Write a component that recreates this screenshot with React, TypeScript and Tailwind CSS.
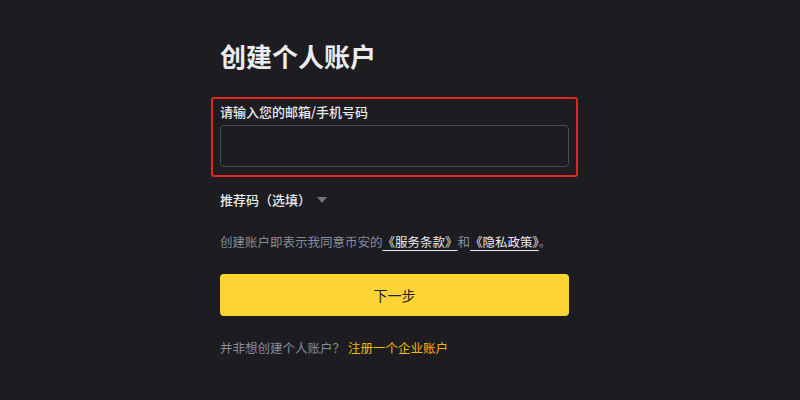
import React from "react";

const App: React.FC = () => {
  return (
    <div
      className="w-[800px] h-[400px] bg-[#1c1c21] overflow-hidden"
      style={{ fontFamily: '"Noto Sans CJK SC", "Noto Sans", sans-serif' }}
    >
      <div className="pl-[220px] pt-[40px] w-[569px] flex flex-col">
        {/* 标题 */}
        <h1 className="text-[26px] leading-[32px] font-bold text-[#eaecef]">创建个人账户</h1>

        {/* 邮箱/手机号 */}
        <div className="relative mt-[31px]">
          <label className="block text-[13px] leading-[18px] text-[#eaecef] font-medium">
            请输入您的邮箱/手机号码
          </label>
          <input
            className="mt-[4px] w-full h-[42px] rounded-[4px] border border-[#474d57] bg-transparent outline-none px-3 text-[14px] text-[#eaecef]"
            type="text"
          />
          <div className="absolute -top-[6px] -bottom-[10px] -left-[9px] -right-[9px] border-2 border-[#e3261f] rounded-[3px] pointer-events-none"></div>
        </div>

        {/* 推荐码 */}
        <div className="mt-[23px] flex items-center gap-[6px] h-[20px]">
          <span className="text-[13px] leading-[20px] font-medium text-[#eaecef]">推荐码（选填）</span>
          <svg width="10" height="6" viewBox="0 0 10 6">
            <polygon points="0,0 10,0 5,6" fill="#6f7582" />
          </svg>
        </div>

        {/* 条款 */}
        <p className="mt-[22px] text-[12.5px] leading-[20px] text-[#848e9c] whitespace-nowrap">
          创建账户即表示我同意币安的
          <a className="text-[#eaecef] underline underline-offset-[3px]">《服务条款》</a>
          和
          <a className="text-[#eaecef] underline underline-offset-[3px]">《隐私政策》</a>
          。
        </p>

        {/* 按钮 */}
        <button className="mt-[22px] h-[42px] w-full rounded-[4px] bg-[#fcd535] text-[14px] text-[#1e2026]">
          下一步
        </button>

        {/* 企业账户 */}
        <p className="mt-[22px] text-[12.5px] leading-[20px] text-[#848e9c] whitespace-nowrap">
          并非想创建个人账户？<span className="ml-[3px] text-[#f0b90b]">注册一个企业账户</span>
        </p>
      </div>
    </div>
  );
};

export default App;
